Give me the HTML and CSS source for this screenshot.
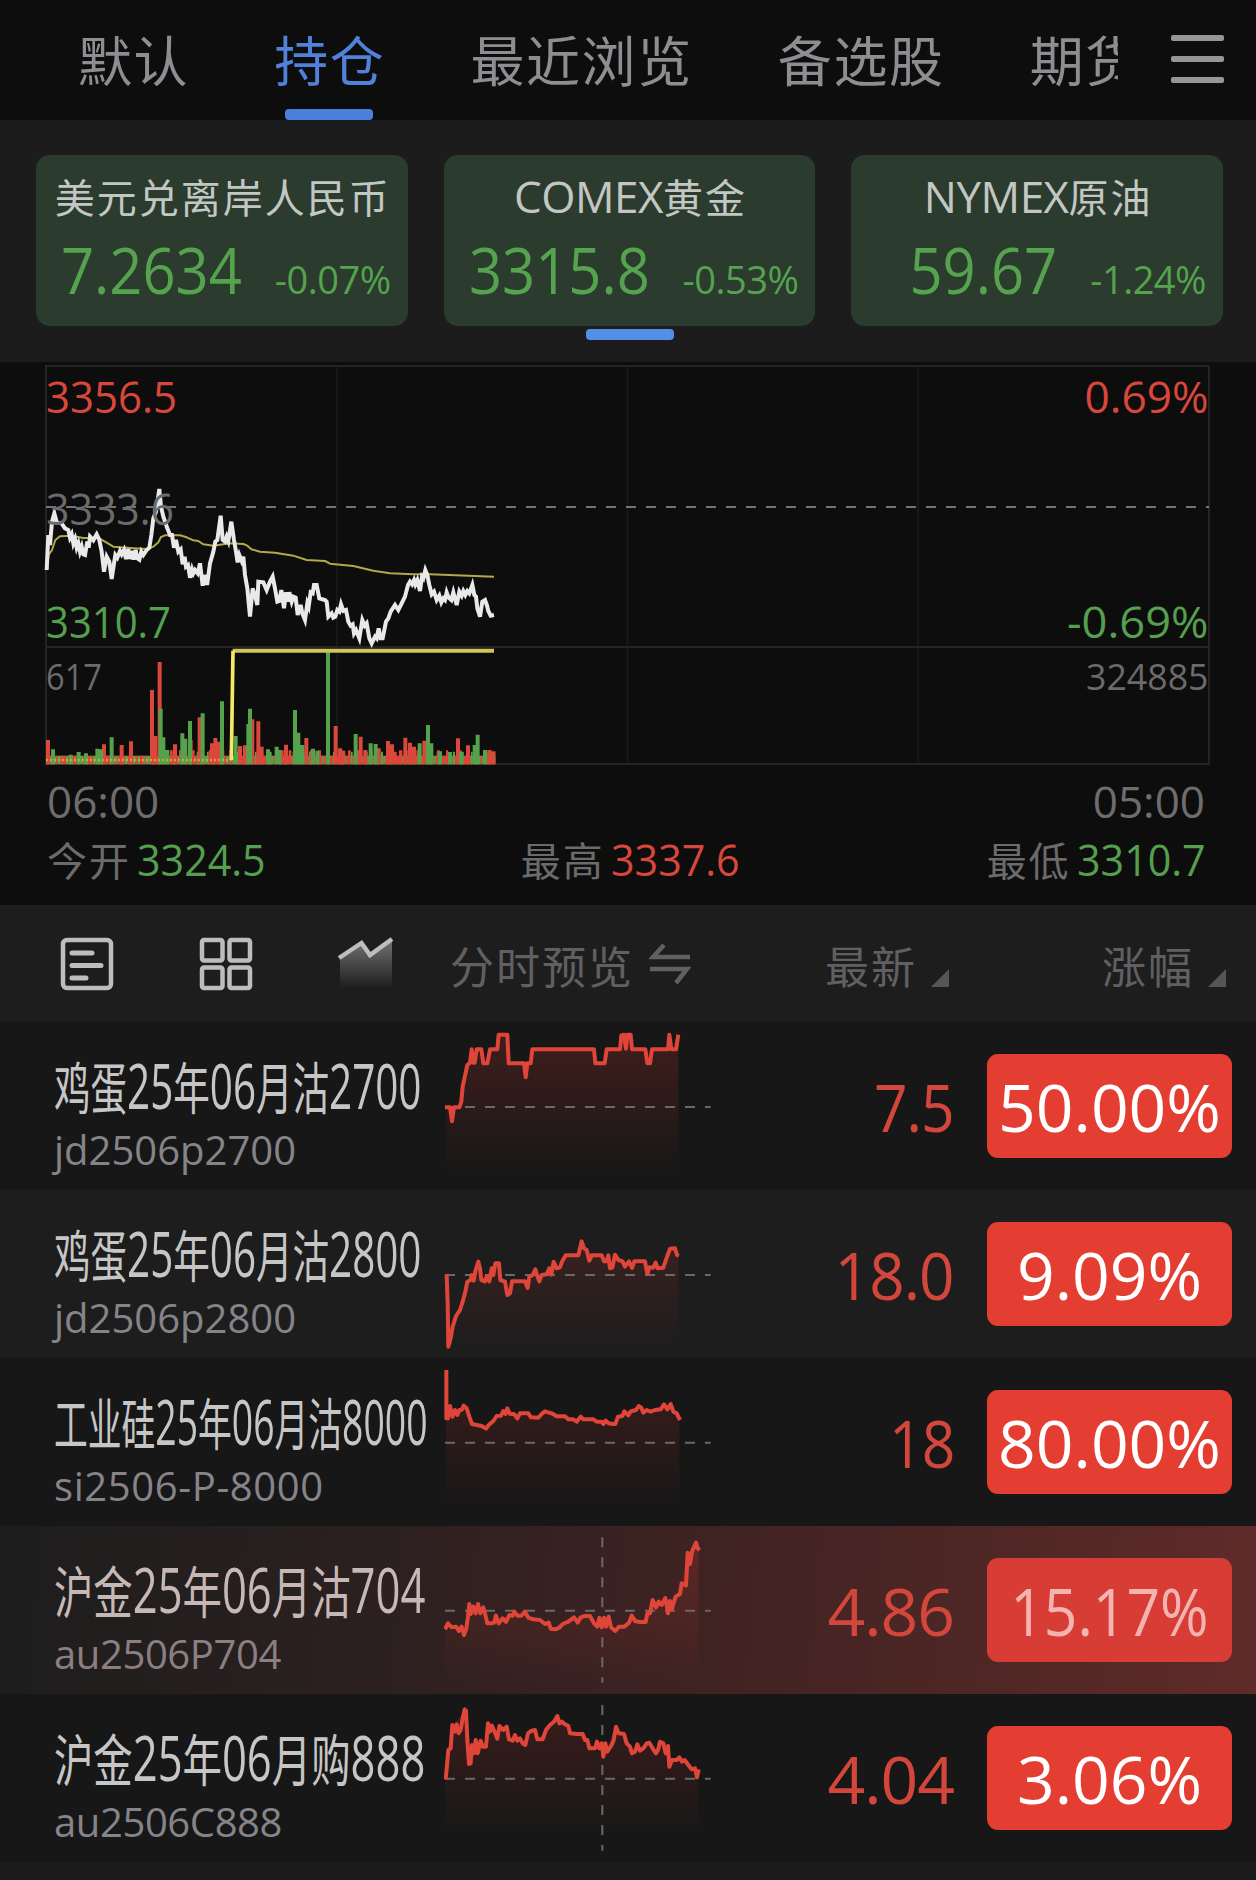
FILE: index.html
```html
<!DOCTYPE html>
<html lang="zh-CN">
<head>
<meta charset="utf-8">
<title>自选行情</title>
<link rel="stylesheet" href="styles.css">
</head>
<body>
<header class="topbar">
  <nav class="tabs">
    <a class="tab">默认</a>
    <a class="tab active">持仓</a>
    <a class="tab">最近浏览</a>
    <a class="tab">备选股</a>
    <a class="tab">期货</a>
  </nav>
  <div class="menu"><i></i><i></i><i></i></div>
</header>

<section class="cards">
  <div class="card">
    <div class="card-title">美元兑离岸人民币</div>
    <div class="card-row"><span class="card-price">7.2634</span><span class="card-pct">-0.07%</span></div>
  </div>
  <div class="card selected">
    <div class="card-title"><span class="latin">COMEX</span>黄金</div>
    <div class="card-row"><span class="card-price">3315.8</span><span class="card-pct">-0.53%</span></div>
  </div>
  <div class="card">
    <div class="card-title"><span class="latin">NYMEX</span>原油</div>
    <div class="card-row"><span class="card-price">59.67</span><span class="card-pct">-1.24%</span></div>
  </div>
</section>

<section class="chart">
  <svg class="chart-svg" width="1256" height="410" viewBox="0 362 1256 410">
    <g class="grid-lines">
      <path class="grid-v" d="M337 366V764M627.5 366V764M918 366V764"/>
      <path d="M46 366H1209V764H46ZM46 647H1209"/>
    </g>
    <g transform="translate(30 630) scale(.33333)">
      <path d="M48 390H1396" stroke="#55a24c" stroke-width="26"/>
      <path d="M48 390H1396" stroke="#df4236" stroke-width="26" stroke-dasharray="7 6 12 5 5 9 16 7"/>
      <path d="M405 384H1396" stroke="#55a24c" stroke-width="38" stroke-dasharray="6 17 9 22 5 13"/>
      <path d="M420 382H1396" stroke="#df4236" stroke-width="42" stroke-dasharray="8 19 6 31 10 15"/>
      <path class="vol-up" d="M54 403V330M275 403V345M303 403V334M366 403V180M376 403V318M389 403V96M435 403V343M482 403V330M509 403V262M546 403V340M556 403V324M567 403V335M630 403V348M645 403V346M667 403V268M685 403V274M695 403V350M768 403V344M829 403V324M917 403V288M930 403V355M940 403V362M992 403V320M1006 403V360M1074 403V333M1086 403V343M1126 403V323M1140 403V338M1152 403V350M1183 403V332M1284 403V325M1314 403V346M1378 403V360M1390 403V364M222 403V343M176 403V378M1046 403V355M1094 403V365"/>
      <path class="vol-down" d="M69 403V358M122 403V374M146 403V366M168 403V370M202 403V356M213 403V358M245 403V322M392 403V236M400 403V322M412 403V360M457 403V310M466 403V326M480 403V273M518 403V250M576 403V214M617 403V318M655 403V282M660 403V236M714 403V358M740 403V350M748 403V360M795 403V240M805 403V308M817 403V345M849 403V356M862 403V362M894 403V66M977 403V312M1022 403V340M1037 403V342M1169 403V340M1194 403V285M1204 403V340M1230 403V364M1343 403V314M1334 403V345M1365 403V360M1260 403V366M1294 403V366"/>
      <path d="M48 390H605" class="vol-total-dots"/>
      <path d="M608 62H1392" class="vol-total"/>
      <path d="M604 390L609 62" class="vol-jump"/>
    </g>
    <g transform="translate(30 355) scale(.33333)">
      <path class="avg" d="M50 645L56 600L66 585L76 555L90 544L125 542L160 549L205 549L225 560L250 575L300 579L350 582L370 575L385 562L393 546L405 541L450 541L470 547L490 556L505 558L520 568L550 572L580 568L600 565L640 567L652 572L664 583L690 590L735 593L790 602L830 615L885 618L900 626L970 633L1030 647L1080 655L1150 658L1200 658L1392 665"/>
      <path class="price" d="M50 645L55 540L60 570L66 500L73 475L80 500L95 505L105 520L115 525L120 548L125 538L130 565L135 552L140 578L145 565L150 590L155 575L160 598L165 600L172 560L176 578L180 545L190 556L200 538L208 555L215 590L222 650L230 605L238 620L245 672L252 625L256 600L262 608L270 588L275 598L282 585L288 612L295 582L300 612L306 588L311 614L317 585L322 610L328 614L334 590L340 600L350 585L358 578L364 540L370 490L378 470L388 402L393 455L400 485L412 520L420 540L426 540L432 578L438 555L445 590L452 583L458 628L464 605L468 635L474 630L480 668L486 643L490 655L495 645L503 655L510 625L518 692L523 660L528 685L532 685L540 625L550 590L556 560L562 555L572 482L578 555L585 560L590 545L595 558L604 500L612 555L618 590L623 622L628 600L635 618L640 605L645 660L652 700L660 785L668 700L675 720L682 750L685 680L700 682L710 705L720 680L728 665L735 700L742 740L748 738L754 705L762 760L768 712L773 740L778 712L785 740L790 725L797 728L803 780L812 750L817 775L825 795L832 745L836 755L842 712L848 715L852 690L860 690L868 730L885 735L890 740L895 785L905 775L910 788L916 785L922 765L928 770L933 748L940 768L948 765L955 800L962 812L968 808L972 835L978 825L988 850L997 795L1004 812L1010 805L1018 850L1025 865L1035 845L1040 850L1046 820L1052 850L1058 850L1068 800L1075 790L1082 770L1095 750L1105 765L1115 745L1125 725L1134 690L1140 680L1146 688L1152 675L1156 688L1162 675L1170 708L1176 665L1180 670L1186 645L1192 660L1198 690L1205 718L1212 710L1220 735L1228 722L1234 742L1240 730L1245 735L1250 712L1256 728L1264 735L1270 712L1280 750L1288 710L1295 722L1300 708L1306 720L1312 708L1318 715L1327 690L1333 720L1338 725L1342 760L1350 785L1357 740L1365 735L1371 752L1375 768L1382 782L1392 780"/>
    </g>
    <path class="base-line" d="M46 507H1209"/>
    <g class="axis">
      <text class="up" x="46" y="412.5" textLength="131" lengthAdjust="spacingAndGlyphs">3356.5</text>
      <text x="46" y="524.5" textLength="128" lengthAdjust="spacingAndGlyphs">3333.6</text>
      <text class="down" x="46" y="637.5" textLength="125" lengthAdjust="spacingAndGlyphs">3310.7</text>
      <text class="up" x="1084.500" y="412.500" textLength="124" lengthAdjust="spacingAndGlyphs">0.69%</text>
      <text class="down" x="1067" y="637.500" textLength="141.500" lengthAdjust="spacingAndGlyphs">-0.69%</text>
      <text class="small" x="46" y="689.500" textLength="56" lengthAdjust="spacingAndGlyphs">617</text>
      <text class="small" x="1086" y="689.500" textLength="122.500" lengthAdjust="spacingAndGlyphs">324885</text>
    </g>
  </svg>
  <div class="times"><span>06:00</span><span>05:00</span></div>
  <div class="stats">
    <div class="stat"><span class="han">今开</span><span class="value down">3324.5</span></div>
    <div class="stat high"><span class="han">最高</span><span class="value up">3337.6</span></div>
    <div class="stat"><span class="han">最低</span><span class="value down">3310.7</span></div>
  </div>
</section>

<section class="toolbar">
  <div class="views">
    <svg width="52" height="52" viewBox="0 0 52 52" class="icon"><rect x="2" y="2" width="48" height="48" rx="4"/><path stroke-width="5" stroke-linecap="round" d="M11 15H31M11 27.500H40M11 40H25"/></svg>
    <svg width="52" height="52" viewBox="0 0 52 52" class="icon"><rect x="2" y="2" width="20.500" height="20.500" rx="2"/><rect x="29.500" y="2" width="20.500" height="20.500" rx="2"/><rect x="2" y="29.500" width="20.500" height="20.500" rx="2"/><rect x="29.500" y="29.500" width="20.500" height="20.500" rx="2"/></svg>
    <svg width="54" height="52" viewBox="0 0 54 52" class="icon">
      <defs><linearGradient id="trend" x1="0" y1="0" x2="0" y2="1"><stop offset="0" stop-color="#888" stop-opacity=".8"/><stop offset="1" stop-color="#888" stop-opacity="0"/></linearGradient></defs>
      <path d="M1 21L22.500 6L31 18L53 2V50H1Z" fill="url(#trend)" stroke="none"/>
      <path d="M0 20L22.500 5L31 17L53 1"/>
    </svg>
  </div>
  <div class="col-label preview">分时预览
    <svg width="42" height="42" viewBox="0 0 42 42"><path d="M41 14H4L15 2M1 26H38L27 40" fill="none" stroke="#606062" stroke-width="4.500"/></svg>
  </div>
  <div class="col-label latest">最新<i class="tri"></i></div>
  <div class="col-label change">涨幅<i class="tri"></i></div>
</section>

<main>
  <svg width="0" height="0" class="defs"><defs>
    <linearGradient id="fill" gradientUnits="userSpaceOnUse" x1="0" y1="30" x2="0" y2="470"><stop offset="0" stop-color="#e5392f" stop-opacity=".2"/><stop offset="1" stop-color="#e5392f" stop-opacity="0"/></linearGradient>
  </defs></svg>

  <div class="row">
    <div class="ident">
      <div class="name n1"><b>鸡蛋</b>25<b>年</b>06<b>月沽</b>2700</div>
      <div class="code">jd2506p2700</div>
    </div>
    <svg class="spark" width="270" height="168" viewBox="42 0 810 504"><g transform="translate(0 -6)">
      <path class="area" d="M48 262H60L66 304L72 262H88L94 245L98 200L104 172L112 135L120 128L125 88L134 128L140 88H154L160 130H172L180 88H202L206 44H232L236 130H282L287 172L292 130H302L307 88H492L496 130H524L530 88H570L574 46L580 44L586 86L592 44H602L606 88H646L652 130H660L666 88H714L718 44L724 88H738L745 44V476H48Z"/>
      <path class="dash" d="M45 261H842"/>
      <path class="line" d="M45 262H60L66 304L72 262H88L94 245L98 200L104 172L112 135L120 128L125 88L130 128L134 128L140 88H154L160 130H172L180 88H202L206 44H232L236 130H282L287 172L292 130H302L307 88H492L496 130H524L530 88H570L574 46L582 44L588 86L592 44H602L606 88H646L652 130H660L666 88H714L718 44L724 88H738L745 44"/>
    </g></svg>
    <div class="last"><span class="slim">7.5</span></div>
    <div class="badge">50.00%</div>
  </div>

  <div class="row alt">
    <div class="ident">
      <div class="name n1"><b>鸡蛋</b>25<b>年</b>06<b>月沽</b>2800</div>
      <div class="code">jd2506p2800</div>
    </div>
    <svg class="spark" width="270" height="168" viewBox="42 0 810 504"><g transform="translate(0 -510)">
      <path class="area low" transform="translate(0 510)" d="M48 255L55 470L72 400L90 360L100 320L112 275L145 215L155 275H178L195 218H208L215 275L235 315L245 275H285L293 295L300 255L315 238L328 272L345 255L375 220L385 235L405 195H445L455 155L480 205L485 195H515L545 235L555 195L580 225H645L652 250L675 225L700 235L720 177L735 175L745 195V470H48Z"/>
      <path class="dash" d="M45 765H842"/>
      <path class="line" d="M50 763L53 850L55 980L62 955L68 920L78 888L90 870L98 845L106 815L112 785L122 780L125 765L131 782L137 750L145 725L150 745L154 780L165 784L170 768L178 784L185 745L190 765L196 730H207L211 780L225 785L232 825L240 820L246 784H285L293 804L298 770L308 765L316 748L322 768L328 784L335 765L350 763L358 745L364 764L371 725L380 745L390 742L396 725L407 706H445L455 664L462 685L470 690L478 722L485 706H515L522 724L530 724L535 706L540 745L547 743L555 704L565 720L578 724L585 740L597 724L606 744L613 724H645L652 762L658 742L670 743L677 728L683 745L700 743L706 725L720 686L735 685L741 705L747 707"/>
    </g></svg>
    <div class="last"><span class="mid">18.0</span></div>
    <div class="badge">9.09%</div>
  </div>

  <div class="row">
    <div class="ident">
      <div class="name n3"><b>工业硅</b>25<b>年</b>06<b>月沽</b>8000</div>
      <div class="code wide">si2506-P-8000</div>
    </div>
    <svg class="spark" width="270" height="168" viewBox="42 0 810 504"><g transform="translate(0 -24)">
      <path class="area" d="M48 190L60 170L70 190L100 168L112 180L125 220L168 236L205 198L230 180L262 204L285 190L320 204L350 184L400 200L445 215L485 208L550 220L580 190L625 168L640 184L690 178L725 165L735 190L748 208V480H48Z"/>
      <path class="dash" d="M45 278H842"/>
      <path class="line" d="M49 60V205L54 205L60 168L68 200L75 180L82 195L88 180H95L101 167L110 175L118 200L126 222L140 225L155 228L168 236L176 225L190 213L200 198L213 197L220 183L227 192L232 175L240 192L252 192L262 205L270 190H295L303 202L325 203L337 190L345 184L365 190L380 199H405L415 208L430 208L440 215L452 200L460 208H490L500 215L515 215L520 222L527 212L536 220L550 222L556 222L564 200L577 198L583 184L595 196L602 184L618 180L626 168L634 173L640 188L650 180L662 185L675 180L692 178L702 163L712 178L722 162L730 185L740 190L750 210"/>
    </g></svg>
    <div class="last"><span class="slim">18</span></div>
    <div class="badge">80.00%</div>
  </div>

  <div class="row flash">
    <div class="ident">
      <div class="name n4"><b>沪金</b>25<b>年</b>06<b>月沽</b>704</div>
      <div class="code close">au2506P704</div>
    </div>
    <svg class="spark" width="270" height="168" viewBox="42 0 810 504"><g transform="translate(0 -528)">
      <path class="area" transform="translate(0 528)" d="M45 305L105 325L118 240L145 240L170 290L210 290L265 265L300 280L375 308L430 275L465 265L500 290L555 315L605 275L645 285L670 225L715 260L750 190L775 90L798 50L806 70V470H45Z"/>
      <path class="dash" d="M45 782H842M517 562V998"/>
      <path class="line" d="M45 838L54 820L65 832L78 830L87 843L95 830L102 855L109 835L114 800L118 762L122 792L130 770L137 790L144 762L151 790L160 772L165 790L172 820L185 820L192 818L198 797L206 820L218 805L228 816L238 795L248 797L253 785L262 797L275 797L284 785L295 803L310 808L330 810L345 822L356 818L362 836L376 838L388 833L398 822L415 815L432 802L443 818L452 802L464 798L480 798L492 820L502 830L508 803L515 832L522 803L528 830L536 800L543 832L556 843L567 830L583 830L597 818L605 797L616 814L630 816L647 816L652 790L660 790L668 750L678 772L686 755L695 765L706 744L714 790L720 753L725 778L737 740L750 732L755 700L768 706L773 608L780 642L786 605L798 578L803 595L809 600"/>
    </g></svg>
    <div class="last">4.86</div>
    <div class="badge"><span class="slim">15.17%</span></div>
  </div>

  <div class="row">
    <div class="ident">
      <div class="name n4"><b>沪金</b>25<b>年</b>06<b>月购</b>888</div>
      <div class="code close">au2506C888</div>
    </div>
    <svg class="spark" width="270" height="168" viewBox="42 0 810 504"><g transform="translate(0 -42)">
      <path class="area" d="M46 295L55 210L70 135L105 90L115 250L140 185L165 200L175 130L200 170L215 140L235 175L285 195L310 150L325 180L380 110L425 160L460 162L480 205L520 225L558 140L605 215L655 190L680 215L700 188L718 250L750 235L806 280V495H46Z"/>
      <path class="dash" d="M45 296H842M517 75V512"/>
      <path class="line" d="M47 298L52 245L55 210L62 205L67 135L74 155L80 133L86 160L92 150L98 115L104 88L108 92L112 180L117 252L122 250L126 195L132 220L137 180L143 220L152 182L158 200L168 200L174 130L180 155L186 137L195 158L202 176L208 138L220 150L230 140L237 178L248 182L255 165L262 182L270 175L278 190L286 195L294 160L305 152L315 150L322 178L338 178L348 150L360 135L372 125L382 108L388 130L395 125L405 133L415 138L420 160L440 162L458 162L465 180L472 180L478 205L495 205L501 185L508 205L515 190L520 230L526 190L532 215L545 195L551 180L558 140L566 160L582 162L590 190L600 200L606 220L615 215L622 193L630 212L640 205L650 190L658 188L668 205L678 220L684 210L690 185L700 190L707 220L714 198L718 260L726 240L740 240L748 232L756 245L764 240L775 255L785 268L795 265L801 292L806 268"/>
    </g></svg>
    <div class="last">4.04</div>
    <div class="badge">3.06%</div>
  </div>
  <div class="row-rest"></div>
</main>
</body>
</html>
```
FILE: styles.css
```css
* { box-sizing: border-box; }
body {
  margin: 0;
  width: 1256px;
  height: 1880px;
  overflow: hidden;
  background: #0d0d0d;
  font-family: "Open Sans", "Noto Sans CJK SC", sans-serif;
  color: #c8c8c8;
}
svg { display: block; }
.up { color: #d7473c; fill: #d7473c; }
.down { color: #559f4f; fill: #559f4f; }

.topbar { height: 120px; display: flex; }
.tabs {
  width: 1118px;
  padding-left: 78px;
  display: flex;
  gap: 85px;
  overflow: hidden;
  white-space: nowrap;
}
.tab {
  position: relative;
  flex: none;
  height: 120px;
  font: 400 54px/118px "Noto Sans CJK SC", sans-serif;
  letter-spacing: 1.6px;
  color: #8e8d92;
}
.tab.active { color: #4f82d8; }
.tab.active::after {
  content: "";
  position: absolute;
  left: 50%;
  bottom: 0;
  width: 88px;
  height: 11px;
  margin-left: -45px;
  border-radius: 4px;
  background: #4a80dc;
}
.menu {
  margin-left: 53px;
  padding-top: 35px;
  display: flex;
  flex-direction: column;
  gap: 15px;
}
.menu i { width: 53px; height: 6px; border-radius: 2px; background: #969696; }

.cards {
  height: 242px;
  padding: 35px 33px 36px 36px;
  display: flex;
  gap: 36px;
  background: #1c1c1c;
}
.card {
  position: relative;
  flex: 1;
  min-width: 0;
  height: 171px;
  padding: 17px 17px 0;
  border-radius: 14px;
  background: #2b3b2d;
}
.card.selected::after {
  content: "";
  position: absolute;
  left: 142px;
  top: 174px;
  width: 88px;
  height: 11px;
  border-radius: 4px;
  background: #5290e8;
}
.card-title {
  height: 48px;
  margin: 0 -11px 0 -9px;
  font: 400 40px/48px "Noto Sans CJK SC", sans-serif;
  letter-spacing: 2px;
  text-align: center;
  white-space: nowrap;
  color: #c3c7c3;
}
.latin { font-family: "Open Sans", sans-serif; font-size: 44px; letter-spacing: -0.5px; line-height: 40px; }
.card-row {
  margin-top: 18px;
  display: flex;
  justify-content: flex-end;
  align-items: baseline;
  gap: 33px;
  line-height: 64px;
  color: #55a24f;
}
.card-price { font-size: 64px; transform: scaleX(.905); transform-origin: right center; }
.card-pct { font-size: 38px; letter-spacing: -0.5px; }

.chart { height: 543px; }
.grid-lines path { fill: none; stroke: #242424; stroke-width: 2; }
.grid-lines .grid-v { stroke: #171717; }
.vol-up { stroke: #d9483b; stroke-width: 12; }
.vol-down { stroke: #55a24c; stroke-width: 12; }
.vol-total { stroke: #d2c455; stroke-width: 12; }
.vol-total-dots { stroke: #c9b34a; stroke-width: 7; stroke-dasharray: 5 7; }
.vol-jump { stroke: #f6e767; stroke-width: 11; }
.avg { fill: none; stroke: #b3a84b; stroke-width: 6; stroke-linejoin: round; }
.price { fill: none; stroke: #e9e9e9; stroke-width: 12; }
.base-line { stroke: #747474; stroke-width: 2; stroke-dasharray: 10 10; }
.axis { font-size: 44px; fill: #6b6b6b; }
.axis .small { font-size: 36px; }
.times, .stats { display: flex; justify-content: space-between; font-size: 44px; line-height: 44px; }
.times { margin-top: 7px; padding: 0 51px 0 47px; color: #6d6d6d; }
.stats { margin-top: 14px; padding: 0 52px 0 47px; }
.stat { display: flex; align-items: baseline; gap: 6px; }
.stat .han { font: 400 40px/44px "Noto Sans CJK SC", sans-serif; letter-spacing: 2px; color: #6b6b6b; }
.stat .value { margin-right: -10px; transform: scaleX(.937); transform-origin: left center; }
.stat.high { margin-left: 8px; }

.toolbar { height: 117px; display: flex; background: #1d1d1d; }
.views { width: 450px; padding: 33px 0 0 61px; display: flex; gap: 87px; }
.icon { fill: none; stroke: #bdbdbd; stroke-width: 4.5; overflow: visible; }
.col-label {
  display: flex;
  font: 400 44px/48px "Noto Sans CJK SC", sans-serif;
  letter-spacing: 2px;
  padding-top: 36px;
  color: #606062;
  white-space: nowrap;
}
.preview { width: 375px; gap: 15px; }
.preview svg { margin-top: 2px; }
.latest { width: 277px; }
.tri {
  width: 18px;
  height: 18px;
  margin: 28px 0 0 14px;
  background: #555558;
  clip-path: polygon(100% 0, 100% 100%, 0 100%);
}

.defs { position: absolute; }
.row {
  height: 168px;
  display: grid;
  grid-template-columns: 444px 270px 273px 245px;
  background: #171717;
}
.row.alt { background: #1d1d1d; }
.row.flash { background: linear-gradient(95deg, #1d1d1d 0%, #2c2020 30%, #402322 58%, #5f2b29 100%); }
.row-rest { height: 18px; background: #1c1c1c; }
.ident { padding: 33px 0 0 54px; white-space: nowrap; overflow: hidden; }
.name {
  width: max-content;
  height: 60px;
  font-size: 62px;
  line-height: 60px;
  transform-origin: left center;
  color: #c6c6c6;
}
.name b { font: 400 56px/56px "Noto Sans CJK SC", sans-serif; }
.n1 { transform: scaleX(.652); }
.n3 { transform: scaleX(.603); }
.n4 { transform: scaleX(.703); }
.code { margin-top: 15px; font-size: 40px; line-height: 40px; color: #858489; }
.code.wide { letter-spacing: 0.6px; }
.code.close { letter-spacing: -0.4px; }
.flash .name { color: #c6b8b7; }
.flash .code { color: #8b7f81; }
.area { fill: url(#fill); }
.dash { stroke: #6c6869; stroke-width: 6; stroke-dasharray: 30 30; }
.line { fill: none; stroke: #e04539; stroke-width: 12; stroke-linejoin: round; }
.last {
  padding: 0 33px 0 0;
  font-size: 66px;
  line-height: 168px;
  letter-spacing: -1px;
  text-align: right;
  color: #d3463b;
}
.slim, .mid { display: inline-block; transform: scaleX(.89); transform-origin: right center; }
.mid { transform: scaleX(.94); }
.badge {
  margin-top: 32px;
  height: 104px;
  border-radius: 11px;
  background: #e43e32;
  color: #fff;
  font-size: 66px;
  line-height: 105px;
  text-align: center;
}
.badge .slim { transform-origin: center; }
.flash .badge { background: #d83d35; color: #f3b3b1; }
```
